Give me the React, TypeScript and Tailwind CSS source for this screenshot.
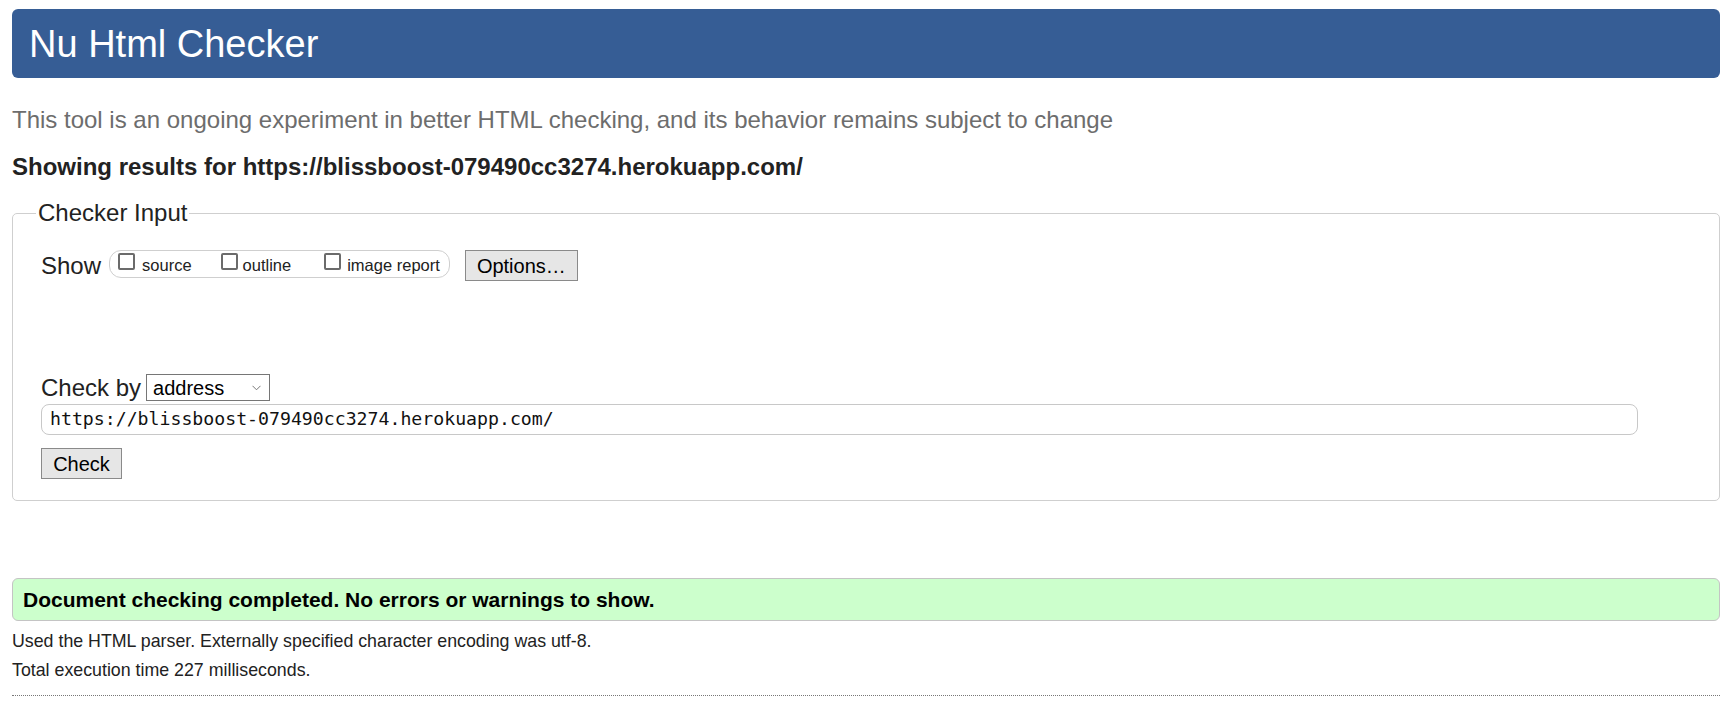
import React from 'react'

function Box({ label, gap }: { label: string; gap: string }) {
  return (
    <span className={`flex items-start ${gap}`}>
      <span className="mt-[1px] h-[17px] w-[17px] rounded-[2px] border-2 border-[#6b6b6b] bg-white" />
      <span className="mt-[4px] text-[16.5px] leading-[19px]">{label}</span>
    </span>
  )
}

export default function App() {
  return (
    <div className="min-h-screen bg-white px-[12px] pt-[9px] font-['Liberation_Sans',Arial,sans-serif] text-[#222]">
      <header className="flex h-[69px] items-center rounded-[6px] bg-[#365d95] pl-[17px]">
        <h1 className="text-[38px] leading-none text-white">Nu Html Checker</h1>
      </header>

      <p className="mt-[27px] text-[24px] leading-[29px] text-[#6d6d6d]">
        This tool is an ongoing experiment in better HTML checking, and its behavior remains subject to change
      </p>
      <p className="mt-[18px] text-[24px] font-bold leading-[29px]">
        Showing results for https://blissboost-079490cc3274.herokuapp.com/
      </p>

      <fieldset className="mt-[18px] rounded-[5px] border border-[#cfcfcf] pt-[23px] pr-[81px] pb-[21px] pl-[28px]">
        <legend className="-ml-[5px] px-[2px] text-[24px] leading-[28px]">Checker Input</legend>

        <div className="flex h-[31px] items-start">
          <span className="text-[24px] leading-[31px]">Show</span>
          <div className="ml-[8px] flex h-[28px] items-start rounded-[12px] border border-[#cfcfcf] pl-[8px] pr-[9px] pt-[1px]">
            <Box label="source" gap="gap-[7px]" />
            <span className="w-[29px]" />
            <Box label="outline" gap="gap-[5px]" />
            <span className="w-[33px]" />
            <Box label="image report" gap="gap-[6px]" />
          </div>
          <button className="ml-[15px] h-[31px] w-[113px] border border-[#8a8a8a] bg-[#e6e6e6] text-[20px] leading-none text-black">
            Options…
          </button>
        </div>

        <div className="mt-[93px] flex h-[27px] items-center">
          <span className="text-[24px] leading-[27px]">Check by</span>
          <div className="ml-[5px] flex h-[27px] w-[124px] items-center justify-between border border-[#767676] bg-white pl-[6px] pr-[8px]">
            <span className="text-[20px] leading-none text-black">address</span>
            <svg width="9" height="6" viewBox="0 0 9 6" fill="none">
              <path d="M0.5 0.8 L4.5 4.8 L8.5 0.8" stroke="#777" strokeWidth="1" />
            </svg>
          </div>
        </div>

        <div className="mt-[3px] flex h-[31px] w-full items-center rounded-[8px] border border-[#c8c8c8] bg-white pl-[8px]">
          <span className="font-['DejaVu_Sans_Mono',monospace] text-[18.2px] leading-none text-[#111]">
            https://blissboost-079490cc3274.herokuapp.com/
          </span>
        </div>

        <button className="mt-[13px] h-[31px] w-[81px] border border-[#8a8a8a] bg-[#e6e6e6] text-[20px] leading-none text-black">
          Check
        </button>
      </fieldset>

      <div className="mt-[77px] flex h-[43px] items-center rounded-[6px] border border-[#c4c4c4] bg-[#ccffcc] pl-[10px]">
        <span className="text-[21px] font-bold leading-none text-black">
          Document checking completed. No errors or warnings to show.
        </span>
      </div>

      <p className="mt-[6px] text-[17.8px] leading-[29px]">
        Used the HTML parser. Externally specified character encoding was utf-8.
      </p>
      <p className="text-[17.8px] leading-[29px]">Total execution time 227 milliseconds.</p>
      <div className="mt-[10px] border-t border-dotted border-[#777]" />
    </div>
  )
}
